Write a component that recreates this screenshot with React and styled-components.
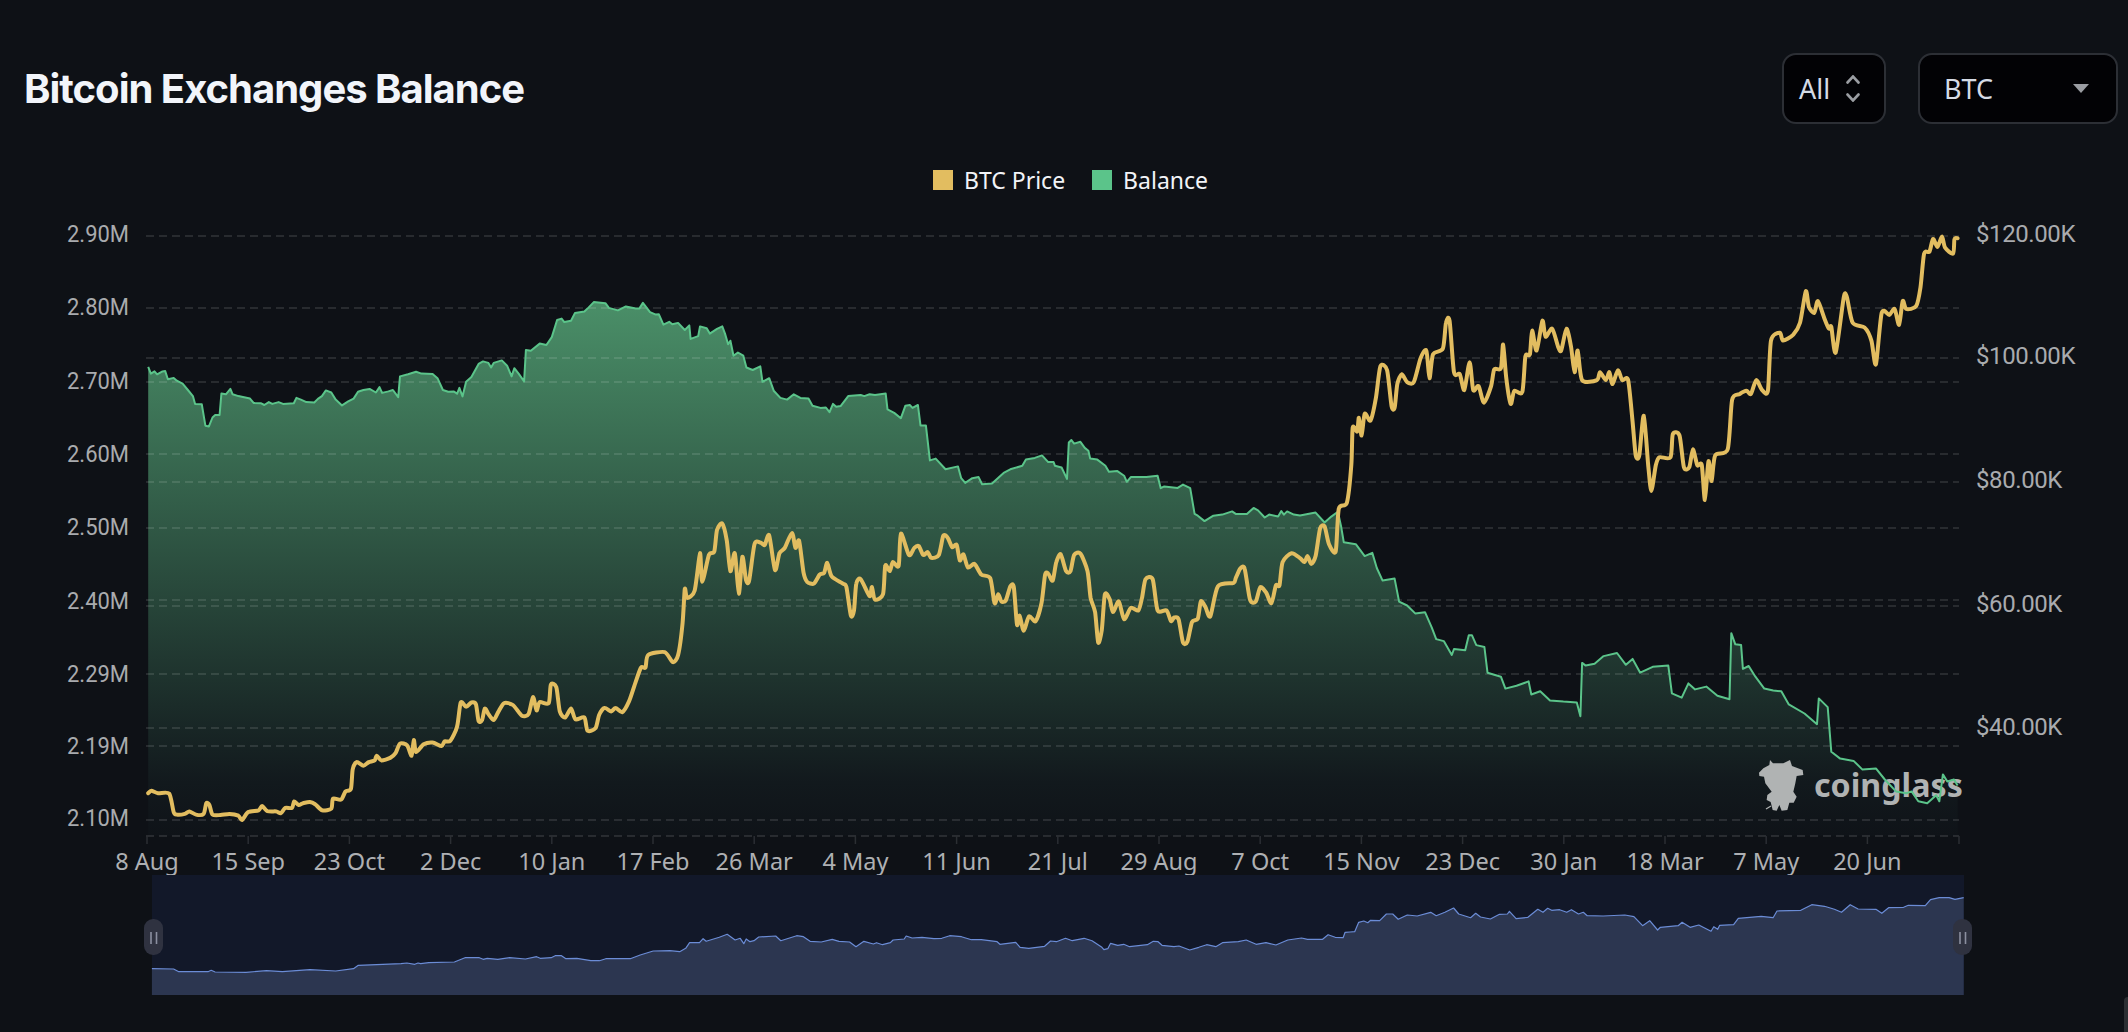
import React from "react";
import styled, { createGlobalStyle } from "styled-components";

const GlobalStyle = createGlobalStyle`
  html, body {
    margin: 0;
    padding: 0;
    background: #0e1116;
  }
  * { box-sizing: border-box; }
`;

const Page = styled.div`
  position: relative;
  width: 2128px;
  height: 1032px;
  overflow: hidden;
  display: flex;
  flex-direction: column;
  background: #0e1116;
  font-family: "Noto Sans", sans-serif;
`;

const Header = styled.header`
  display: flex;
  align-items: center;
  justify-content: space-between;
  padding: 53px 10px 0 24px;
`;

const Title = styled.h1`
  margin: 0;
  font-family: Inter, sans-serif;
  font-size: 40px;
  font-weight: 700;
  letter-spacing: -1px;
  color: #f2f5fa;
`;

const Controls = styled.div`
  display: flex;
  gap: 32px;
`;

const SelectButton = styled.button`
  display: flex;
  align-items: center;
  justify-content: space-between;
  width: ${(p) => p.$width}px;
  height: 71px;
  padding: ${(p) => p.$padding};
  background: #020205;
  border: 2px solid #2c2f35;
  border-radius: 14px;
  color: #d5dbe5;
  font-family: "Noto Sans", sans-serif;
  font-size: 27px;
`;

const Legend = styled.div`
  display: flex;
  justify-content: center;
  gap: 27px;
  margin-top: 46px;
  padding-left: 13px;
  height: 20px;
`;

const LegendItem = styled.div`
  display: flex;
  align-items: center;
  gap: 11px;
  font-size: 23px;
  line-height: 20px;
  color: #f2f4f7;
`;

const Swatch = styled.span`
  width: 20px;
  height: 20px;
  background: ${(p) => p.$color};
`;

const Chart = styled.svg`
  display: block;
  margin-top: 10px;
`;

const AxisLabel = styled.text`
  font-family: Roboto, sans-serif;
  font-size: 24px;
  fill: #a9abae;
`;

const DateLabel = styled.text`
  font-family: "Noto Sans", sans-serif;
  font-size: 23.5px;
  fill: #aeb0b3;
  text-anchor: middle;
`;

const Watermark = styled.text`
  font-family: "Noto Sans", sans-serif;
  font-size: 32.2px;
  font-weight: 700;
  fill: #b0b3b3;
`;

const CornerTab = styled.div`
  position: absolute;
  right: 0;
  bottom: 0;
  width: 4px;
  height: 35px;
  background: #2c2f33;
  border-radius: 6px 0 0 0;
`;

// points were read off the reference in three overlapping crops
const toReal = (x0, y0, sx, sy, flat) => {
  const out = [];
  for (let i = 0; i < flat.length; i += 2) {
    out.push([x0 + flat[i] / sx, y0 + flat[i + 1] / sy]);
  }
  return out;
};

const balance = [
  ...toReal(100, 280, 2.24, 2.8, [
    108,243,114,262,122,256,128,264,140,256,146,255,152,278,165,274,172,282,185,290,197,308,208,325,213,347,228,348,236,408,244,410,252,385,258,378,268,378,272,318,282,320,292,305,297,320,310,325,320,328,336,332,344,344,360,345,368,350,378,342,386,347,400,342,410,347,434,345,440,330,450,335,462,342,480,343,488,333,497,325,506,309,518,315,528,335,542,351,556,340,568,332,578,313,590,308,604,305,618,315,626,300,632,316,646,312,656,308,668,328,672,270,690,264,708,257,720,262,745,263,756,275,768,308,780,313,792,312,800,318,805,302,812,326,820,285,832,272,848,235,858,228,870,232,876,245,882,232,900,225,912,240,922,270,928,247,938,263,950,284,954,196,965,198,985,178,1000,182,1012,160,1024,112,1034,108,1040,118,1055,114,1064,92,1085,88,1092,80,1106,62,1132,65,1140,78,1160,85,1178,74,1200,80,1208,80,1216,64,1232,90,1245,97,1252,96,1262,125,1275,117,1282,124,1295,120,1310,140,1320,127,1323,165,1340,157,
  ]),
  ...toReal(700, 280, 2.24, 2.8, [
    0,130,15,135,22,150,38,137,50,130,56,150,63,180,68,170,75,212,85,203,97,212,104,245,118,252,135,242,140,285,155,275,165,310,180,330,195,335,210,320,225,330,243,332,252,352,270,358,282,357,290,370,298,347,305,355,315,353,332,325,360,322,368,325,380,320,392,322,416,318,420,362,435,372,450,387,460,352,470,350,476,358,488,350,494,407,506,407,515,505,528,500,550,530,578,522,585,555,594,568,610,555,624,552,632,572,654,570,680,540,695,530,722,520,730,503,750,498,766,491,780,510,792,510,795,520,810,525,822,557,826,455,832,448,838,458,852,453,862,470,870,478,874,500,890,503,908,520,916,537,935,535,950,548,956,565,965,552,1000,552,1025,548,1032,583,1040,578,1070,582,1082,573,1098,583,1108,655,1115,660,1130,675,1150,660,1170,657,1192,648,1200,655,1225,655,1240,638,1250,645,1265,665,1275,657,1295,662,1302,647,1308,657,1315,648,1330,657,
  ]),
  ...toReal(1300, 220, 2.24, 2.529, [
    0,747,35,740,55,765,70,750,85,738,92,775,98,815,125,820,145,850,162,842,172,880,185,912,212,907,222,965,240,975,258,995,280,992,295,1030,305,1060,322,1065,340,1100,345,1085,370,1088,378,1050,385,1050,395,1075,413,1080,420,1145,450,1155,460,1185,485,1178,512,1167,518,1200,538,1192,560,1215,590,1218,620,1220,628,1255,632,1120,640,1127,660,1122,680,1103,710,1095,730,1125,745,1110,762,1145,790,1130,825,1127,833,1197,855,1208,870,1172,885,1187,910,1180,935,1203,962,1212,966,1045,975,1073,988,1075,992,1135,1005,1128,1020,1155,1040,1185,1060,1190,1078,1192,1095,1225,1130,1248,1158,1275,1162,1210,1182,1232,1190,1345,1210,1362,1240,1368,1260,1390,1290,1387,1310,1415,1335,1445,1358,1450,1370,1445,1385,1470,1405,1475,1425,1455,1432,1470,1440,1402,1450,1420,1465,1415,1473,1430,
  ]),
];

const price = [
  ...toReal(100, 280, 2.24, 2.8, [
    108,1437,115,1430,130,1437,155,1438,165,1490,172,1497,190,1495,200,1488,215,1497,232,1495,238,1465,245,1470,252,1497,270,1498,290,1495,310,1500,318,1512,332,1490,355,1485,363,1473,375,1487,395,1488,405,1493,415,1478,430,1478,435,1460,445,1470,455,1465,470,1462,482,1468,498,1485,518,1480,522,1452,540,1455,550,1432,562,1425,566,1370,575,1350,590,1360,602,1350,615,1345,620,1332,630,1345,650,1338,662,1325,672,1298,688,1303,698,1332,703,1288,708,1322,725,1300,745,1295,765,1305,772,1292,785,1290,800,1250,808,1183,820,1195,832,1183,842,1188,848,1235,856,1232,862,1200,870,1215,882,1232,892,1210,905,1185,925,1190,945,1220,960,1215,970,1168,978,1205,985,1182,1005,1185,1010,1133,1022,1140,1030,1208,1042,1225,1055,1200,1065,1230,1085,1225,1092,1262,1110,1255,1118,1218,1130,1198,1145,1208,1155,1198,1170,1210,1185,1180,1200,1125,1212,1085,1222,1085,1228,1050,1265,1042,1283,1070,1295,1050,1305,960,1310,865,1315,890,1332,870,
  ]),
  ...toReal(700, 280, 2.24, 2.8, [
    0,765,5,845,20,770,32,760,38,700,50,682,60,730,68,815,78,765,87,878,95,775,103,840,110,842,122,740,135,735,145,742,155,715,168,812,178,765,190,750,206,708,214,750,222,730,232,820,240,845,255,850,268,825,278,820,285,792,295,830,320,850,328,860,338,940,345,925,350,850,360,838,380,885,385,860,392,895,410,880,415,800,425,815,432,790,445,800,450,710,468,770,480,750,490,745,500,770,510,762,518,778,535,770,545,716,555,722,565,748,575,742,582,785,590,768,600,805,615,795,630,825,650,835,660,905,668,880,675,900,685,897,695,858,703,860,710,965,716,940,725,982,737,942,752,955,765,905,773,825,780,822,790,842,798,790,808,768,820,815,830,815,838,770,852,766,868,815,875,890,885,930,892,1015,900,980,907,880,918,895,925,930,938,900,950,950,965,918,982,925,990,890,998,838,1014,838,1025,925,1045,925,1055,955,1062,945,1072,950,1082,1015,1092,1012,1102,958,1115,948,1122,900,1132,915,1143,942,1160,858,1195,848,1200,835,1210,808,1220,808,1232,895,1245,900,1255,860,1268,875,1280,905,1290,855,1298,855,1305,790,1325,765,
  ]),
  ...toReal(1300, 220, 2.24, 2.529, [
    0,855,10,865,17,850,25,870,35,850,45,780,55,775,65,820,80,838,87,730,105,715,115,620,118,525,128,535,132,500,138,545,145,490,158,507,170,450,180,370,195,380,205,470,212,475,218,415,228,390,240,410,255,410,270,350,283,330,290,400,298,340,320,325,327,260,335,255,345,385,358,390,368,430,380,360,388,430,400,420,412,462,428,420,435,378,450,375,455,315,462,400,472,465,480,432,498,435,505,345,515,340,520,280,530,330,543,255,550,295,565,275,578,320,585,330,597,275,607,320,615,385,622,330,632,405,665,405,672,385,685,405,693,385,700,415,712,380,722,405,735,405,745,510,752,595,760,595,770,495,780,620,787,685,797,620,805,600,830,600,835,542,850,545,860,625,872,625,880,580,890,620,900,620,907,708,915,610,922,660,930,595,958,580,968,455,985,440,1000,432,1010,440,1022,405,1035,430,1048,432,1055,305,1075,285,1082,305,1105,290,1120,260,1133,180,1140,220,1152,235,1160,205,1175,250,1185,275,1190,270,1200,335,1218,195,1225,195,1238,260,1265,272,1280,305,1290,365,1303,235,1320,240,1332,225,1342,265,1350,205,1358,225,1380,218,1390,170,1398,85,1410,80,1418,48,1428,68,1438,42,1445,70,1463,85,1466,48,1473,46,
  ]),
];

const overview = [
  ...toReal(140, 870, 2.529, 3, [
    30,296,85,297,98,305,172,305,180,301,190,306,268,307,320,302,360,305,430,299,495,303,540,296,552,286,660,281,675,279,695,283,703,279,710,281,730,278,795,276,822,263,858,263,868,268,878,265,905,268,935,263,975,267,1003,260,1012,265,1040,263,1050,257,1066,257,1077,266,1105,265,1140,272,1162,272,1178,266,1240,266,1265,255,1298,243,1340,242,1365,245,1380,235,1390,218,1415,218,1424,206,1432,214,1465,202,1485,193,1505,210,1518,205,1527,221,1533,207,
  ]),
  ...toReal(750, 870, 2.529, 3, [
    0,215,10,212,22,201,65,198,78,212,118,197,135,200,152,214,180,216,208,208,225,214,252,216,268,230,288,214,312,222,320,218,335,224,355,218,362,210,390,207,395,198,410,204,435,202,465,206,485,205,505,197,535,200,560,209,585,209,625,215,632,223,672,217,683,232,705,235,745,229,760,213,775,215,798,205,815,212,845,205,865,212,890,232,895,239,905,236,912,220,930,226,945,223,960,230,1005,224,1020,214,1032,215,1042,226,1072,230,1085,228,1112,240,1135,232,1155,224,1178,230,1195,218,1235,215,1255,210,1280,223,1305,218,1330,225,1360,210,1395,204,1410,208,1448,208,1462,194,1480,202,1500,203,1505,187,
  ]),
  ...toReal(1350, 870, 2.529, 3, [
    0,186,12,185,22,157,35,153,45,158,52,151,75,152,92,132,108,132,122,148,145,135,170,138,204,127,218,137,240,127,262,114,275,132,305,143,318,130,330,141,355,147,378,133,398,132,403,124,420,146,450,142,475,118,488,127,500,115,510,121,530,119,548,127,560,119,578,132,590,127,600,137,640,138,695,135,718,140,740,167,758,152,778,180,785,172,830,167,840,157,860,172,882,165,913,184,920,170,930,178,935,166,970,164,982,145,1040,139,1070,143,1080,123,1140,121,1168,104,1200,109,1225,118,1243,127,1265,104,1285,117,1330,118,1345,130,1362,113,1400,112,1412,106,1455,107,1468,89,1490,83,1515,83,1530,88,1552,83,
  ]),
];

const toPoints = (pts) => pts.map(([x, y]) => `${x.toFixed(1)},${y.toFixed(1)}`).join(" ");
const closeTo = (pts, bottom) =>
  `${toPoints(pts)} ${pts[pts.length - 1][0].toFixed(1)},${bottom} ${pts[0][0].toFixed(1)},${bottom}`;

// catmull-rom through the points, the price line is rounded in the original
const toSmoothPath = (pts) => {
  let d = `M${pts[0][0].toFixed(1)} ${pts[0][1].toFixed(1)}`;
  for (let i = 0; i < pts.length - 1; i++) {
    const p0 = pts[i - 1] || pts[i];
    const p1 = pts[i];
    const p2 = pts[i + 1];
    const p3 = pts[i + 2] || p2;
    const c1x = p1[0] + (p2[0] - p0[0]) / 8;
    const c1y = p1[1] + (p2[1] - p0[1]) / 8;
    const c2x = p2[0] - (p3[0] - p1[0]) / 8;
    const c2y = p2[1] - (p3[1] - p1[1]) / 8;
    d += ` C${c1x.toFixed(1)} ${c1y.toFixed(1)} ${c2x.toFixed(1)} ${c2y.toFixed(1)} ${p2[0].toFixed(1)} ${p2[1].toFixed(1)}`;
  }
  return d;
};

const GRID_LINES = [236, 308, 358, 382, 454, 482, 528, 600, 606, 674, 728, 746, 820, 836];
const LEFT_LABELS = [
  ["2.90M", 233], ["2.80M", 306], ["2.70M", 380], ["2.60M", 453], ["2.50M", 526],
  ["2.40M", 600], ["2.29M", 673], ["2.19M", 745], ["2.10M", 817],
];
const RIGHT_LABELS = [
  ["$120.00K", 233], ["$100.00K", 355], ["$80.00K", 479], ["$60.00K", 603], ["$40.00K", 726],
];
const DATES = [
  "8 Aug", "15 Sep", "23 Oct", "2 Dec", "10 Jan", "17 Feb", "26 Mar", "4 May", "11 Jun",
  "21 Jul", "29 Aug", "7 Oct", "15 Nov", "23 Dec", "30 Jan", "18 Mar", "7 May", "20 Jun",
];

const UpDownIcon = () => (
  <svg width="14" height="27" viewBox="0 0 14 27" fill="none" stroke="#9a9da2" strokeWidth="2.6" strokeLinecap="round">
    <path d="M1.5 7.5 L7 1.5 L12.5 7.5" />
    <path d="M1.5 19.5 L7 25.5 L12.5 19.5" />
  </svg>
);

const CaretIcon = () => (
  <svg width="16" height="9" viewBox="0 0 16 9">
    <polygon points="0,0 16,0 8,9" fill="#9a9da2" />
  </svg>
);

const Handle = ({ x }) => (
  <g>
    <rect x={x} y="919" width="19" height="36" rx="9" fill="#2f3240" />
    <path d={`M${x + 7} 932 V944 M${x + 12.5} 932 V944`} stroke="#8b8fa0" strokeWidth="1.6" />
  </g>
);

const Logo = () => (
  <g fill="#b0b3b3">
    <path
      transform="translate(1750 750) scale(0.3333)"
      d="M27 68 L40 55 L58 45 L60 30 L69 40 L100 40 L120 30 L126 48 L158 60 L160 75 L140 78 L136 100 L130 125 L140 140 L131 158 L118 158 L112 180 L95 182 L88 165 L80 182 L68 180 L62 156 L50 150 L52 135 L65 125 L46 100 L42 80 L28 78 Z"
    />
    <path d="M1766 809 L1771 806" stroke="#b0b3b3" strokeWidth="1.2" />
    <Watermark x="1814" y="797">coinglass</Watermark>
  </g>
);

const App = () => (
  <Page>
    <GlobalStyle />
    <Header>
      <Title>Bitcoin Exchanges Balance</Title>
      <Controls>
        <SelectButton $width={104} $padding="0 24px 0 15px">
          All
          <UpDownIcon />
        </SelectButton>
        <SelectButton $width={200} $padding="0 27px 0 24px">
          BTC
          <CaretIcon />
        </SelectButton>
      </Controls>
    </Header>
    <Legend>
      <LegendItem>
        <Swatch $color="#e2bd60" />
        BTC Price
      </LegendItem>
      <LegendItem>
        <Swatch $color="#5bc48a" />
        Balance
      </LegendItem>
    </Legend>
    <Chart width="2128" height="832" viewBox="0 200 2128 832">
      <defs>
        <linearGradient id="balanceFill" gradientUnits="userSpaceOnUse" x1="0" y1="302" x2="0" y2="836">
          <stop offset="0" stopColor="#4a8f68" />
          <stop offset="0.9" stopColor="#12191d" />
          <stop offset="1" stopColor="#0f1318" />
        </linearGradient>
      </defs>
      <polygon points={closeTo(balance, 836)} fill="url(#balanceFill)" />
      {GRID_LINES.map((y) => (
        <line key={y} x1="146" x2="1959" y1={y} y2={y} stroke="#ffffff" strokeOpacity="0.15" strokeWidth="1.5" strokeDasharray="8 5" />
      ))}
      {DATES.map((d, i) => {
        const x = 147 + 101.2 * i;
        return (
          <g key={d}>
            <line x1={x} x2={x} y1="836" y2="844" stroke="#2b2e33" strokeWidth="1.5" />
            <DateLabel x={x} y="870">{d}</DateLabel>
          </g>
        );
      })}
      <line x1="1959" x2="1959" y1="836" y2="844" stroke="#2b2e33" strokeWidth="1.5" />
      {LEFT_LABELS.map(([t, y]) => (
        <AxisLabel key={t} x="67" y={y + 8.5} textLength="62" lengthAdjust="spacingAndGlyphs">{t}</AxisLabel>
      ))}
      {RIGHT_LABELS.map(([t, y]) => (
        <AxisLabel key={t} x="1976" y={y + 8.5} letterSpacing="-0.4">{t}</AxisLabel>
      ))}
      <Logo />
      <polyline points={toPoints(balance)} fill="none" stroke="#5bc48a" strokeWidth="2" strokeLinejoin="round" />
      <path d={toSmoothPath(price)} fill="none" stroke="#e2bd60" strokeWidth="4" strokeLinejoin="round" strokeLinecap="round" />

      <rect x="152" y="875" width="1812" height="120" fill="#121829" />
      <polygon points={closeTo(overview, 995)} fill="#2c3650" />
      <polyline points={toPoints(overview)} fill="none" stroke="#6b8cd6" strokeWidth="1.2" strokeLinejoin="round" />
      <Handle x={144} />
      <Handle x={1953} />
    </Chart>
    <CornerTab />
  </Page>
);

export default App;
